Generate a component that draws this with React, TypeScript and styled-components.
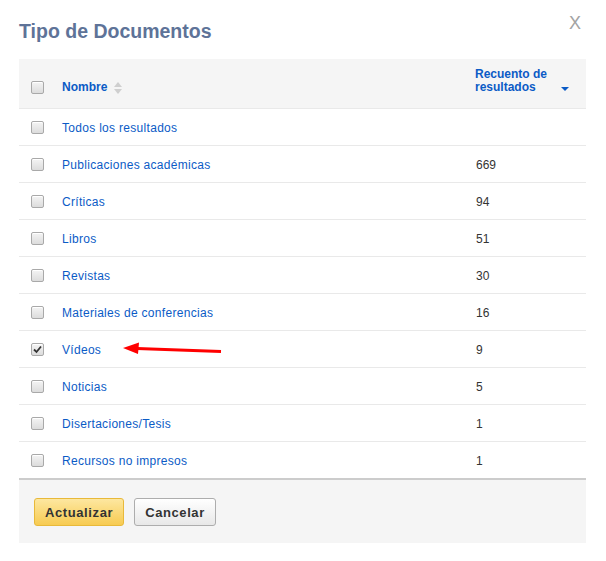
import styled, { createGlobalStyle } from "styled-components";

const GlobalStyle = createGlobalStyle`
  body {
    margin: 0;
    background: #fff;
    font-family: "Liberation Sans", Arial, sans-serif;
  }
`;

const Dialog = styled.div`
  width: 606px;
  height: 561px;
  box-sizing: border-box;
  padding: 0 20px 0 19px;
  position: relative;
`;

const TitleBar = styled.div`
  display: flex;
  justify-content: space-between;
  align-items: flex-start;
  height: 59px;
`;

const Title = styled.h2`
  margin: 19px 0 0;
  font-size: 19.5px;
  font-weight: bold;
  line-height: 24px;
  color: #5e7398;
`;

const Close = styled.span`
  margin: 13px 5px 0 0;
  font-size: 18px;
  line-height: 20px;
  color: #a3a3a3;
  cursor: pointer;
`;

const Row = styled.div<{ $head?: boolean }>`
  display: grid;
  grid-template-columns: 43px 413px 1fr;
  height: ${(p) => (p.$head ? "50px" : "37px")};
  box-sizing: border-box;
  align-items: ${(p) => (p.$head ? "end" : "center")};
  padding: ${(p) => (p.$head ? "0 0 14px" : "2px 0 0")};
  background: ${(p) => (p.$head ? "#f5f5f5" : "#fff")};
  border-bottom: 1px solid #e9e9e9;
  position: relative;
  &:last-of-type {
    height: 38px;
    border-bottom: 2px solid #cccccc;
  }
`;

const Box = styled.span<{ $checked?: boolean }>`
  display: flex;
  align-items: center;
  justify-content: center;
  width: 11px;
  height: 11px;
  margin: -2px 0 0 12px;
  border: 1px solid #a9a9a9;
  border-radius: 2px;
  background: linear-gradient(#f4f4f4, #dcdcdc);
  box-shadow: inset 0 1px 0 #fff;
  svg {
    display: ${(p) => (p.$checked ? "block" : "none")};
  }
`;

const HeadLabel = styled.span`
  display: flex;
  align-items: center;
  gap: 7px;
  font-size: 12px;
  font-weight: bold;
  line-height: 13px;
  color: #0b5bc6;
`;

const CountHead = styled.div`
  display: flex;
  align-items: flex-end;
  padding-right: 17px;
  font-size: 12px;
  font-weight: bold;
  line-height: 13px;
  color: #0b5bc6;
`;

const SortDown = styled.span`
  margin: 0 0 3px auto;
  width: 0;
  height: 0;
  border-left: 4px solid transparent;
  border-right: 4px solid transparent;
  border-top: 4px solid #0b5bc6;
`;

const Name = styled.a`
  font-size: 12px;
  letter-spacing: 0.3px;
  color: #0b5bc6;
  text-decoration: none;
  cursor: pointer;
`;

const Count = styled.span`
  font-size: 12px;
  color: #333;
  padding-left: 1px;
`;

const Arrow = styled.svg`
  position: absolute;
  left: 104px;
  top: 11px;
`;

const Footer = styled.div`
  display: flex;
  gap: 10px;
  height: 63px;
  padding: 18px 0 0 15px;
  box-sizing: border-box;
  background: #f5f5f5;
`;

const Button = styled.button<{ $primary?: boolean }>`
  height: 28px;
  padding: 0 10px;
  font-family: "Liberation Sans", Arial, sans-serif;
  font-size: 13px;
  font-weight: bold;
  letter-spacing: 0.6px;
  color: #333;
  border-radius: 3px;
  border: 1px solid ${(p) => (p.$primary ? "#e8b93a" : "#adadad")};
  background: ${(p) =>
    p.$primary
      ? "linear-gradient(#fde7a0, #f7cb52)"
      : "linear-gradient(#ffffff, #e8e8e8)"};
  cursor: pointer;
`;

const items = [
  { name: "Todos los resultados", count: "" },
  { name: "Publicaciones académicas", count: "669" },
  { name: "Críticas", count: "94" },
  { name: "Libros", count: "51" },
  { name: "Revistas", count: "30" },
  { name: "Materiales de conferencias", count: "16" },
  { name: "Vídeos", count: "9", checked: true },
  { name: "Noticias", count: "5" },
  { name: "Disertaciones/Tesis", count: "1" },
  { name: "Recursos no impresos", count: "1" },
];

const Check = () => (
  <svg width="9" height="9" viewBox="0 0 9 9">
    <path d="M1 4.5 L3.5 7 L8 1.5" stroke="#333" strokeWidth="1.8" fill="none" />
  </svg>
);

const SortBoth = () => (
  <svg width="8" height="12" viewBox="0 0 8 12">
    <path d="M4 0 L8 5 H0 Z" fill="#cfcfcf" />
    <path d="M4 12 L8 7 H0 Z" fill="#cfcfcf" />
  </svg>
);

export default function App() {
  return (
    <Dialog>
      <GlobalStyle />
      <TitleBar>
        <Title>Tipo de Documentos</Title>
        <Close>X</Close>
      </TitleBar>
      <div>
        <Row $head>
          <Box>
            <Check />
          </Box>
          <HeadLabel>
            Nombre <SortBoth />
          </HeadLabel>
          <CountHead>
            <span>
              Recuento de
              <br />
              resultados
            </span>
            <SortDown />
          </CountHead>
        </Row>
        {items.map((item) => (
          <Row key={item.name}>
            <Box $checked={item.checked}>
              <Check />
            </Box>
            <Name>{item.name}</Name>
            <Count>{item.count}</Count>
            {item.checked && (
              <Arrow width="100" height="14" viewBox="0 0 100 14">
                <path d="M98 9.5 L14 6.5" stroke="#f00" strokeWidth="3" />
                <path d="M0 6 L16 0.5 L15 12 Z" fill="#f00" />
              </Arrow>
            )}
          </Row>
        ))}
      </div>
      <Footer>
        <Button $primary>Actualizar</Button>
        <Button>Cancelar</Button>
      </Footer>
    </Dialog>
  );
}
